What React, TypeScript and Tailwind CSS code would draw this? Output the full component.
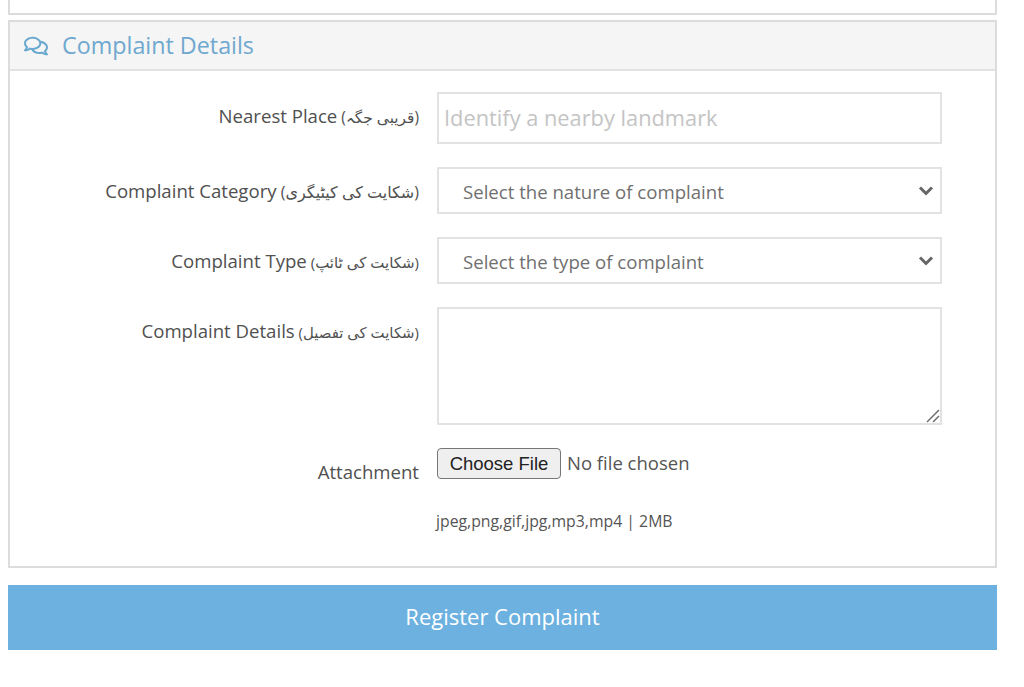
import React from "react";
import { FaRegComments } from "react-icons/fa";

function Chevron() {
  return (
    <svg className="absolute right-[8px] top-1/2 -translate-y-1/2 pointer-events-none" width="16" height="12" viewBox="0 0 16 12" fill="none">
      <path d="M2 2.5 L8 8.500 L14 2.500" stroke="#666666" strokeWidth="3" />
    </svg>
  );
}

function Label({ en, ur, urClass = "", className = "" }: { en: string; ur?: string; urClass?: string; className?: string }) {
  return (
    <label className={`block text-right text-[18.6px] leading-[24px] text-[#505050] ${className}`}>
      {en}
      {ur ? <span className={urClass}> {ur}</span> : null}
    </label>
  );
}

function SelectRow({ en, ur, urClass, placeholder }: { en: string; ur: string; urClass: string; placeholder: string }) {
  return (
    <div className="grid grid-cols-[409px_505px] gap-x-[18px] mb-[23px]">
      <Label en={en} ur={ur} urClass={urClass} className="pt-[12px]" />
      <div className="relative h-[47px]">
        <select className="w-full h-full appearance-none bg-white border-2 border-[#e2e2e2] pl-[24px] pt-[2px] text-[18.6px] text-[#707070] outline-none">
          <option>{placeholder}</option>
        </select>
        <Chevron />
      </div>
    </div>
  );
}

export default function App() {
  return (
    <div className="w-[1024px] h-[687px] overflow-hidden bg-white pl-[8px] font-['Open_Sans','DejaVu_Sans',sans-serif]">
      <div className="w-[989px] h-[15px] border-x-2 border-b-2 border-[#dcdcdc]" />
      <div className="w-[989px] mt-[5px] h-[548px] border-2 border-[#dcdcdc]">
        <div className="h-[49px] bg-[#f5f5f5] border-b-2 border-[#e2e2e2] flex items-center pl-[14px] gap-[14px]">
          <FaRegComments className="w-[24px] h-[24px] text-[#6aa9cf]" />
          <span className="text-[23.3px] leading-[32px] text-[#6fa8cf] -translate-y-px">Complaint Details</span>
        </div>
        <div className="pt-[21px]">
          <div className="grid grid-cols-[409px_505px] gap-x-[18px] mb-[23px]">
            <Label en="Nearest Place" ur="(قریبی جگہ)" urClass="text-[15.4px]" className="pt-[12px]" />
            <input
              placeholder="Identify a nearby landmark"
              className="h-[52px] w-full border-2 border-[#e2e2e2] px-[5px] pb-[2px] text-[21.8px] text-[#555555] placeholder:text-[#c4c4c4] outline-none"
            />
          </div>
          <SelectRow en="Complaint Category" ur="(شکایت کی کیٹیگری)" urClass="text-[16px]" placeholder="Select the nature of complaint" />
          <SelectRow en="Complaint Type" ur="(شکایت کی ٹائپ)" urClass="text-[15px]" placeholder="Select the type of complaint" />
          <div className="grid grid-cols-[409px_505px] gap-x-[18px] mb-[23px]">
            <Label en="Complaint Details" ur="(شکایت کی تفصیل)" urClass="text-[14.9px]" className="pt-[12px]" />
            <div className="relative h-[118px]">
              <textarea className="block h-full w-full resize-none border-2 border-[#e2e2e2] outline-none" />
              <svg className="absolute right-[2px] bottom-[2px] pointer-events-none" width="14" height="14" viewBox="0 0 14 14" fill="none">
                <path d="M1 13 L13 1 M7 13 L13 7" stroke="#6e6e6e" strokeWidth="1.500" />
              </svg>
            </div>
          </div>
          <div className="grid grid-cols-[409px_505px] gap-x-[18px]">
            <Label en="Attachment" className="pt-[12px]" />
            <div>
              <input
                type="file"
                className="block w-full h-[31px] text-[18.5px] leading-[29px] text-[#555555] file:h-[31px] file:w-[124px] file:mr-[6px] file:border file:border-[#767676] file:rounded-[4px] file:bg-[#efefef] file:text-[#222222] file:text-[18.5px] file:font-['Liberation_Sans',sans-serif]"
              />
              <p className="mt-[32px] text-[15.8px] leading-[20px] text-[#555555] -ml-px">jpeg,png,gif,jpg,mp3,mp4 | 2MB</p>
            </div>
          </div>
        </div>
      </div>
      <button className="block w-[989px] h-[65px] mt-[17px] pb-[2px] bg-[#6cb1e0] text-white text-[22px]">Register Complaint</button>
    </div>
  );
}
